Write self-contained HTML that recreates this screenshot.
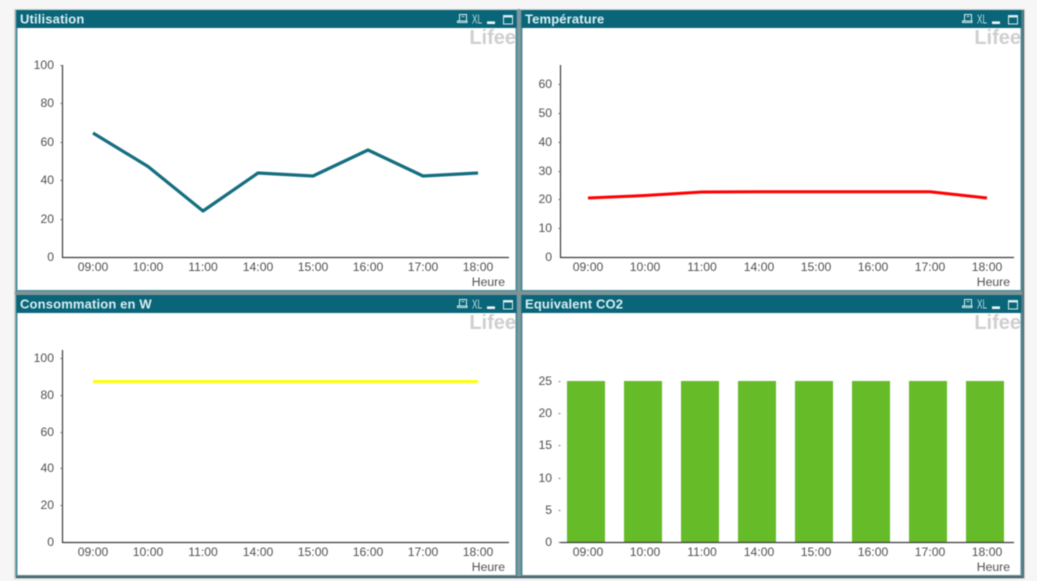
<!DOCTYPE html>
<html><head><meta charset="utf-8"><style>
html,body{margin:0;padding:0;width:1037px;height:581px;overflow:hidden;background:#f7f6f7}
svg{display:block;filter:blur(.45px)}
text{font-family:"Liberation Sans",sans-serif}
.t{font-size:13px;font-weight:bold;fill:#d9eef2;letter-spacing:.15px}
.l{font-size:12.2px;fill:#505050}
.e{text-anchor:end}
.m{text-anchor:middle}
.w{font-size:20px;font-weight:bold;fill:#cfcfcf;text-anchor:end}
.x{font-size:13px;fill:#bcdde4}
</style></head><body>
<svg width="1037" height="581" viewBox="0 0 1037 581" xmlns="http://www.w3.org/2000/svg">
<defs>
<g id="ic" fill="none" stroke="#d4ebef" stroke-width="1">
<path d="M-56.500 .500h7v6.500h-7zM-58.500 8.500h9.500v-1.500h-9.500z"/>
<path d="M-54.500 2.500h3" stroke-width=".8"/>
<path d="M-29 8.700h8" stroke-width="2.600" stroke="#eef8fa"/>
<path d="M-12.500 1.500h9v8.500h-9z"/><path d="M-12.500 2.500h9" stroke-width="2"/>
</g>
<g id="pn">
<rect x="0" y="0" width="502" height="282" fill="#4f8e9b"/>
<rect x="2" y="18" width="498" height="262" fill="#fff"/>
<rect x="1" y="0" width="500" height="18" fill="#0a6578"/>
</g>
</defs>

<rect x="14" y="9" width="1011" height="570" fill="#8b9799" opacity=".4"/>

<use href="#pn" x="15.500" y="10"/>
<use href="#pn" x="520.500" y="10"/>
<use href="#pn" x="15.500" y="295"/>
<use href="#pn" x="520.500" y="295"/>

<rect x="517.500" y="9" width="3" height="568" fill="#85979b"/>
<rect x="15" y="291.500" width="1008" height="3.500" fill="#7f9396"/>
<rect x="16" y="576.500" width="1008" height="1.500" fill="#4b5558"/>
<rect x="1022.500" y="10" width="1.500" height="568" fill="#5b6568"/>

<text class="t" x="20" y="23.500">Utilisation</text>
<text class="t" x="525" y="23.500">Température</text>
<text class="t" x="20" y="308.500">Consommation en W</text>
<text class="t" x="525" y="308.500">Equivalent CO2</text>

<use href="#ic" x="516" y="14"/><use href="#ic" x="1021" y="14"/>
<use href="#ic" x="516" y="299"/><use href="#ic" x="1021" y="299"/>
<text class="x" x="472" y="23.500" textLength="10" lengthAdjust="spacingAndGlyphs">XL</text><text class="x" x="977" y="23.500" textLength="10" lengthAdjust="spacingAndGlyphs">XL</text>
<text class="x" x="472" y="308.500" textLength="10" lengthAdjust="spacingAndGlyphs">XL</text><text class="x" x="977" y="308.500" textLength="10" lengthAdjust="spacingAndGlyphs">XL</text>

<text class="w" x="516" y="44">Lifee</text><text class="w" x="1021" y="44">Lifee</text>
<text class="w" x="516" y="329">Lifee</text><text class="w" x="1021" y="329">Lifee</text>

<!-- Chart 1 -->
<path d="M62.500 65v192.500H509" fill="none" stroke="#3d3d3d" stroke-width="1.200"/>
<path d="M60.500 65.500h2M60.500 103.500h2M60.500 142.500h2M60.500 180.500h2M60.500 219.500h2" stroke="#666"/>
<g class="l e"><text x="54" y="69">100</text><text x="54" y="107">80</text><text x="54" y="146">60</text><text x="54" y="184">40</text><text x="54" y="223">20</text><text x="54" y="261">0</text></g>
<g class="l m"><text x="93" y="271">09:00</text><text x="148" y="271">10:00</text><text x="203" y="271">11:00</text><text x="258" y="271">14:00</text><text x="313" y="271">15:00</text><text x="368" y="271">16:00</text><text x="423" y="271">17:00</text><text x="478" y="271">18:00</text></g>
<text class="l e" x="505" y="286">Heure</text>
<polyline points="93,133 148,166.500 203,211 258,173 313,176 368,150 423,176 478,173" fill="none" stroke="#146e80" stroke-width="3.200" stroke-linejoin="round"/>

<!-- Chart 2 -->
<path d="M560.500 65v192.500H1014" fill="none" stroke="#3d3d3d" stroke-width="1.200"/>
<path d="M558.500 84.500h2M558.500 113.500h2M558.500 142.500h2M558.500 171.500h2M558.500 199.500h2M558.500 228.500h2" stroke="#666"/>
<g class="l e"><text x="552" y="88">60</text><text x="552" y="117">50</text><text x="552" y="146">40</text><text x="552" y="175">30</text><text x="552" y="203">20</text><text x="552" y="232">10</text><text x="552" y="261">0</text></g>
<g class="l m"><text x="588" y="271">09:00</text><text x="645" y="271">10:00</text><text x="702" y="271">11:00</text><text x="759" y="271">14:00</text><text x="816" y="271">15:00</text><text x="873" y="271">16:00</text><text x="930" y="271">17:00</text><text x="987" y="271">18:00</text></g>
<text class="l e" x="1010" y="286">Heure</text>
<polyline points="588,198 645,195.500 702,192 759,191.800 816,191.800 873,191.800 930,191.800 987,198" fill="none" stroke="#ff0000" stroke-width="3" stroke-linejoin="round"/>

<!-- Chart 3 -->
<path d="M62.500 350v192.500H509" fill="none" stroke="#3d3d3d" stroke-width="1.200"/>
<path d="M60.500 358.500h2M60.500 395.500h2M60.500 432.500h2M60.500 468.500h2M60.500 505.500h2" stroke="#666"/>
<g class="l e"><text x="54" y="362">100</text><text x="54" y="399">80</text><text x="54" y="436">60</text><text x="54" y="472">40</text><text x="54" y="509">20</text><text x="54" y="546">0</text></g>
<g class="l m"><text x="93" y="556">09:00</text><text x="148" y="556">10:00</text><text x="203" y="556">11:00</text><text x="258" y="556">14:00</text><text x="313" y="556">15:00</text><text x="368" y="556">16:00</text><text x="423" y="556">17:00</text><text x="478" y="556">18:00</text></g>
<text class="l e" x="505" y="571">Heure</text>
<path d="M93 381.500H478" stroke="#ffff00" stroke-width="3"/>

<!-- Chart 4 -->
<g fill="#66bb29">
<rect x="567" y="381" width="38" height="161"/><rect x="624" y="381" width="38" height="161"/><rect x="681" y="381" width="38" height="161"/><rect x="738" y="381" width="38" height="161"/><rect x="795" y="381" width="38" height="161"/><rect x="852" y="381" width="38" height="161"/><rect x="909" y="381" width="38" height="161"/><rect x="966" y="381" width="38" height="161"/>
</g>
<path d="M560 542.500H1014" stroke="#3d3d3d" stroke-width="1.200"/>
<path d="M558.500 381.500h2M558.500 413.500h2M558.500 445.500h2M558.500 478.500h2M558.500 510.500h2M558.500 542.500h2" stroke="#888"/>
<g class="l e"><text x="552" y="385">25</text><text x="552" y="417">20</text><text x="552" y="449">15</text><text x="552" y="482">10</text><text x="552" y="514">5</text><text x="552" y="546">0</text></g>
<g class="l m"><text x="588" y="556">09:00</text><text x="645" y="556">10:00</text><text x="702" y="556">11:00</text><text x="759" y="556">14:00</text><text x="816" y="556">15:00</text><text x="873" y="556">16:00</text><text x="930" y="556">17:00</text><text x="987" y="556">18:00</text></g>
<text class="l e" x="1010" y="571">Heure</text>
</svg>
</body></html>
